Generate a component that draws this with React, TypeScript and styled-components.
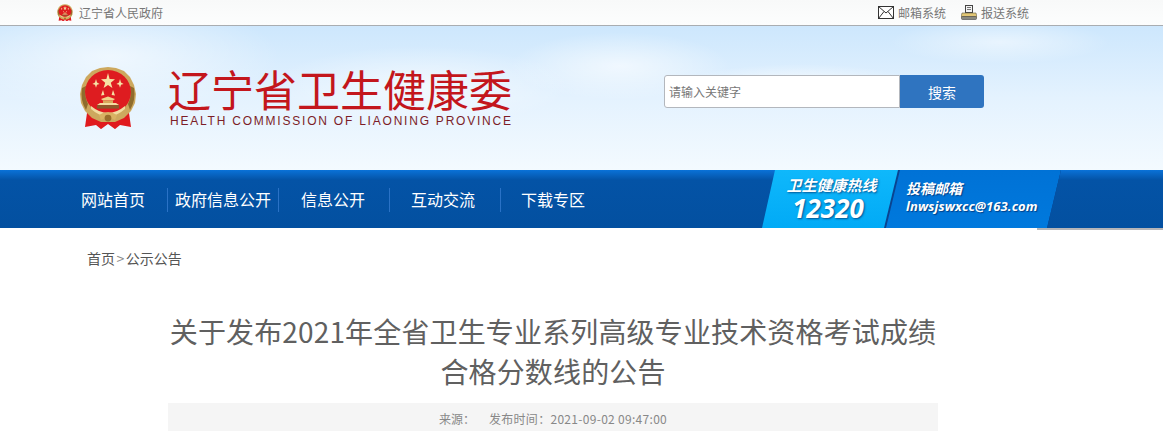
import React from 'react';
import styled, { createGlobalStyle } from 'styled-components';

const CJK = `"Noto Sans CJK SC", "Noto Sans", sans-serif`;

const GlobalStyle = createGlobalStyle`
  html, body {
    margin: 0;
    padding: 0;
    background: #fff;
  }
  #root {
    height: 431px;
    overflow: hidden;
    font-family: ${CJK};
  }
`;

const TopBar = styled.div`
  display: flex;
  align-items: center;
  height: 25px;
  padding-left: 57px;
  background: linear-gradient(#f8f9f9, #fcfdfd);
  border-bottom: 1px solid #a9adb1;
  font-size: 12px;
  color: #8a8a8a;
`;

const TopLink = styled.a<{ $gap?: number }>`
  display: flex;
  align-items: center;
  gap: ${(p) => p.$gap ?? 4}px;
  color: #777;
  line-height: 25px;
`;

const TopLinks = styled.div`
  display: flex;
  gap: 15px;
  margin-left: auto;
  margin-right: 134px;
`;

const Hero = styled.div`
  display: flex;
  align-items: flex-start;
  height: 144px;
  padding: 40px 0 0 79px;
  box-sizing: border-box;
  background:
    radial-gradient(ellipse 170px 55px at 110px 30px, rgba(255, 255, 255, 0.6), transparent),
    radial-gradient(ellipse 150px 40px at 420px 60px, rgba(255, 255, 255, 0.55), transparent),
    radial-gradient(ellipse 110px 34px at 620px 40px, rgba(255, 255, 255, 0.6), transparent),
    radial-gradient(ellipse 120px 22px at 800px 60px, rgba(255, 255, 255, 0.75), transparent),
    radial-gradient(ellipse 110px 22px at 1000px 16px, rgba(255, 255, 255, 0.5), transparent),
    linear-gradient(#cde7fd, #e4f2fe 50%, #f3faff);
`;

const Brand = styled.div`
  display: flex;
  flex-direction: column;
  width: 344px;
  margin: -2px 0 0 31px;
`;

const BrandName = styled.div`
  font-size: 43px;
  line-height: 48px;
  color: #c3161c;
  white-space: nowrap;
`;

const BrandSub = styled.div`
  margin-top: 2px;
  padding-left: 2px;
  font-family: "Liberation Sans", Arial, sans-serif;
  font-size: 12px;
  line-height: 14px;
  letter-spacing: 1.78px;
  color: #7c1d27;
  white-space: nowrap;
`;

const Search = styled.div`
  display: flex;
  height: 33px;
  margin: 9px 0 0 152px;
`;

const SearchInput = styled.div`
  display: flex;
  align-items: center;
  width: 236px;
  box-sizing: border-box;
  padding-left: 4px;
  background: #fff;
  border: 1px solid #b3b7bd;
  border-radius: 3px 0 0 3px;
  font-size: 12px;
  color: #777;
`;

const SearchButton = styled.div`
  display: flex;
  align-items: center;
  justify-content: center;
  width: 84px;
  background: #2f74c0;
  border-radius: 0 3px 3px 0;
  font-size: 14px;
  color: #fff;
`;

const Nav = styled.div`
  display: flex;
  align-items: stretch;
  height: 58px;
  padding-left: 57px;
  background: linear-gradient(#0a72d8, #0453a6 10px, #0350a0);
`;

const NavItem = styled.div<{ $last?: boolean }>`
  display: flex;
  align-items: center;
  justify-content: center;
  width: 110px;
  height: 24px;
  margin-top: 18px;
  border-right: 1px solid ${(p) => (p.$last ? 'transparent' : '#2a72c6')};
  font-size: 16px;
  color: #fff;
  white-space: nowrap;
`;

const NavLabel = styled.span<{ $shift: number }>`
  margin: 0 ${(p) => p.$shift}px 2px 0;
`;

const Hotline = styled.div`
  display: flex;
  margin-left: 150px;
`;

const HotCard = styled.div`
  display: flex;
  flex-direction: column;
  align-items: center;
  width: 137px;
  box-sizing: border-box;
  padding: 5px 0 0 2px;
  background: linear-gradient(#0fb8fb, #01aaf6);
  clip-path: polygon(13px 0, 100% 0, calc(100% - 14px) 100%, 0 100%);
  color: #fff;
  font-style: italic;
  font-weight: 700;
  text-shadow: 1px 1px 2px rgba(0, 50, 110, 0.75);
`;

const HotLabel = styled.div`
  font-size: 15px;
  line-height: 20px;
`;

const HotNumber = styled.div`
  margin-right: 7px;
  font-family: "Open Sans", sans-serif;
  font-size: 26px;
  line-height: 27px;
`;

const MailEdge = styled.div`
  width: 177px;
  margin-left: -15px;
  background: #0a438f;
  clip-path: polygon(14px 0, 100% 0, calc(100% - 14px) 100%, 0 100%);
`;

const MailCard = styled.div`
  display: flex;
  flex-direction: column;
  justify-content: center;
  height: 100%;
  box-sizing: border-box;
  padding: 0 0 5px 22px;
  background: linear-gradient(#0072d6, #0079dd);
  clip-path: polygon(16px 0, 100% 0, calc(100% - 14px) 100%, 2px 100%);
  color: #fff;
  font-style: italic;
  font-weight: 700;
  text-shadow: 1px 1px 1px rgba(0, 40, 100, 0.7);
`;

const MailLabel = styled.div`
  font-size: 14px;
  line-height: 20px;
`;

const MailAddress = styled.div`
  font-family: "Open Sans", sans-serif;
  font-size: 13px;
  line-height: 17px;
  letter-spacing: 0.1px;
  white-space: nowrap;
`;

const Crumbs = styled.div`
  padding: 19px 0 0 87px;
  background: linear-gradient(#b5b5b8, #b5b5b8) 1037px 0 / 100% 2px no-repeat;
  font-size: 14px;
  line-height: 22px;
  color: #555;
`;

const CrumbSep = styled.span`
  margin: 0 1.5px;
  color: #888;
`;

const Article = styled.div`
  width: 770px;
  margin: 42px 0 0 168px;
`;

const Title = styled.h1`
  margin: 0;
  font-size: 28px;
  font-weight: 400;
  line-height: 40px;
  letter-spacing: 0.15px;
  text-align: center;
  color: #606060;
`;

const Meta = styled.div`
  display: flex;
  justify-content: center;
  gap: 14px;
  margin-top: 12px;
  height: 32px;
  background: #f5f5f5;
  font-size: 12px;
  line-height: 32px;
  color: #888;
`;

const MetaTime = styled.span`
  letter-spacing: 0.3px;
`;

const Emblem = ({ size }: { size: number }) => (
  <svg width={size} height={size * 1.09} viewBox="0 0 58 63" style={{ flex: 'none' }}>
    {/* ribbons */}
    <path d="M8 47 L6 61 L17 59 L22 63 L29 58 L36 63 L41 59 L52 61 L50 47 Z" fill="#e01a1e" />
    {/* gold ring with wheat edge */}
    <path d="M29 1 L37 2 L45 5 L51 11 L55 19 L57 28 L56 37 L52 45 L45 52 L36 56 L22 56 L13 52 L6 45 L2 37 L1 28 L3 19 L7 11 L13 5 L21 2 Z" fill="#cda85e" />
    <path d="M9 38 Q5 30 7 20 L3 22 Q1 34 7 44 Z M49 38 Q53 30 51 20 L55 22 Q57 34 51 44 Z" fill="#8f6c2c" />
    <ellipse cx="29" cy="26" rx="23" ry="22" fill="#de1c20" />
    <path d="M12 40 Q29 54 46 40 L46 43 Q29 58 12 43 Z" fill="#f1dca0" />
    {/* stars */}
    <path d="M29 7 L30.6 13 L36 13.2 L31.8 16.6 L33.4 22 L29 18.8 L24.6 22 L26.2 16.6 L22 13.2 L27.4 13 Z" fill="#f6e2a4" />
    <path d="M17 13 L18 16.4 L20.6 18 L18 18.6 L17 21.6 L16 18.6 L13.4 18 L16 16.4 Z M41 13 L42 16.4 L44.6 18 L42 18.6 L41 21.6 L40 18.6 L37.4 18 L40 16.4 Z" fill="#f6e2a4" />
    <path d="M24 24 L25.4 29 L22 29.5 Z M34 24 L32.6 29 L36 29.5 Z" fill="#f6e2a4" />
    {/* gate */}
    <path d="M22 33 L29 30.5 L36 33 L34 34.5 L24 34.5 Z" fill="#f0d48a" />
    <rect x="24" y="34.5" width="10" height="2.5" fill="#d8a85a" />
    <path d="M18 39 L21 36.8 L37 36.8 L40 39 Z" fill="#f3dca0" />
    <rect x="18" y="39" width="22" height="3.5" fill="#8c5a2c" />
    {/* cog at foot */}
    <path d="M20 49 Q29 43 38 49 L36 54 Q29 49 22 54 Z" fill="#d9b263" />
    <circle cx="29" cy="52" r="3.4" fill="#9a6e2c" />
  </svg>
);

const MailIcon = () => (
  <svg width="16" height="13" viewBox="0 0 16 13" fill="none" stroke="#333" strokeWidth="1">
    <rect x="0.5" y="0.5" width="15" height="12" fill="#fff" />
    <path d="M0.5 0.5 L8 7 L15.5 0.5 M0.5 12.5 L6 5.5 M15.5 12.5 L10 5.5" />
  </svg>
);

const PrinterIcon = () => (
  <svg width="16" height="15" viewBox="0 0 16 15">
    <rect x="4.5" y="0.5" width="7" height="7" fill="#f4f4f4" stroke="#444" />
    <path d="M6 2.5 H10 M6 4.5 H10" stroke="#777" />
    <path d="M1 8 H15 L16 12 H0 Z" fill="#e2c775" stroke="#5e5a45" strokeWidth="0.6" />
    <rect x="0.5" y="11.5" width="15" height="3" rx="1" fill="#8a8a80" stroke="#444" strokeWidth="0.6" />
  </svg>
);

const navItems = [
  { label: '网站首页', shift: -2 },
  { label: '政府信息公开', shift: 0 },
  { label: '信息公开', shift: 2 },
  { label: '互动交流', shift: 4 },
  { label: '下载专区', shift: 6 },
];

export default function App() {
  return (
    <>
      <GlobalStyle />
      <TopBar>
        <TopLink $gap={6}>
          <Emblem size={16} />
          辽宁省人民政府
        </TopLink>
        <TopLinks>
          <TopLink>
            <MailIcon />
            邮箱系统
          </TopLink>
          <TopLink>
            <PrinterIcon />
            报送系统
          </TopLink>
        </TopLinks>
      </TopBar>
      <Hero>
        <Emblem size={58} />
        <Brand>
          <BrandName>辽宁省卫生健康委</BrandName>
          <BrandSub>HEALTH COMMISSION OF LIAONING PROVINCE</BrandSub>
        </Brand>
        <Search>
          <SearchInput>请输入关键字</SearchInput>
          <SearchButton>搜索</SearchButton>
        </Search>
      </Hero>
      <Nav>
        {navItems.map((item, i) => (
          <NavItem key={item.label} $last={i === navItems.length - 1}>
            <NavLabel $shift={item.shift}>{item.label}</NavLabel>
          </NavItem>
        ))}
        <Hotline>
          <HotCard>
            <HotLabel>卫生健康热线</HotLabel>
            <HotNumber>12320</HotNumber>
          </HotCard>
          <MailEdge>
            <MailCard>
              <MailLabel>投稿邮箱</MailLabel>
              <MailAddress>lnwsjswxcc@163.com</MailAddress>
            </MailCard>
          </MailEdge>
        </Hotline>
      </Nav>
      <Crumbs>
        首页<CrumbSep>&gt;</CrumbSep>公示公告
      </Crumbs>
      <Article>
        <Title>
          关于发布2021年全省卫生专业系列高级专业技术资格考试成绩
          <br />
          合格分数线的公告
        </Title>
        <Meta>
          <span>来源：</span>
          <MetaTime>发布时间：2021-09-02 09:47:00</MetaTime>
        </Meta>
      </Article>
    </>
  );
}
